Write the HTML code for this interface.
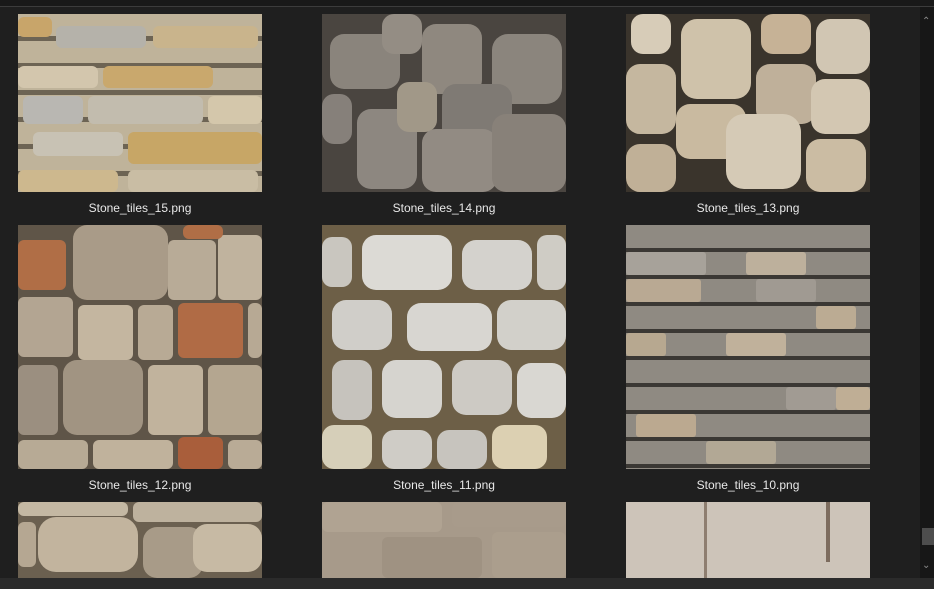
<!DOCTYPE html>
<html><head><meta charset="utf-8"><style>
html,body{margin:0;padding:0}
body{width:934px;height:589px;background:#1f1f1f;position:relative;overflow:hidden;font-family:"Liberation Sans",sans-serif}
.topline{position:absolute;left:0;top:0;width:934px;height:6px;background:#191919;border-bottom:1px solid #3c3c3c}
.sb{position:absolute;left:920px;top:7px;width:14px;height:571px;background:#171717}
.thumb{position:absolute;left:922px;top:528px;width:12px;height:17px;background:#4d4d4d}
.bottom{position:absolute;left:0;top:578px;width:934px;height:11px;background:#2b2b2b}
.t{position:absolute;overflow:hidden;width:244px}
.lbl{position:absolute;width:244px;text-align:center;color:#e8e8e8;font-size:12px}
.s{position:absolute;border-radius:6px}
.arr{position:absolute;left:922px;color:#8a8a8a;font-size:10px}
</style></head><body>
<div class="topline"></div>
<div class="sb"></div><div class="thumb"></div>
<div class="arr" style="top:16px">&#8963;</div>
<div class="arr" style="top:560px">&#8964;</div>
<div class="bottom"></div>

<!-- row 1 -->
<div class="t" style="left:18px;top:14px;height:178px;background:
repeating-linear-gradient(180deg,#bfb39a 0 22px,#6d6454 22px 27px);">
<div class="s" style="left:0;top:3px;width:34px;height:20px;background:#c8a56a"></div>
<div class="s" style="left:38px;top:12px;width:90px;height:22px;background:#b5b2aa"></div>
<div class="s" style="left:135px;top:12px;width:105px;height:22px;background:#c9b48c"></div>
<div class="s" style="left:0;top:52px;width:80px;height:22px;background:#d3c6ad"></div>
<div class="s" style="left:85px;top:52px;width:110px;height:22px;background:#c9a86d"></div>
<div class="s" style="left:5px;top:82px;width:60px;height:28px;background:#b9b7b2"></div>
<div class="s" style="left:70px;top:82px;width:115px;height:28px;background:#c2bcae"></div>
<div class="s" style="left:190px;top:82px;width:54px;height:28px;background:#d4c7ab"></div>
<div class="s" style="left:15px;top:118px;width:90px;height:24px;background:#c8c2b4"></div>
<div class="s" style="left:110px;top:118px;width:134px;height:32px;background:#c7a666"></div>
<div class="s" style="left:0;top:156px;width:100px;height:22px;background:#cdb88e"></div>
<div class="s" style="left:110px;top:156px;width:130px;height:22px;background:#c9bda4"></div>
</div>
<div class="lbl" style="left:18px;top:201px">Stone_tiles_15.png</div>

<div class="t" style="left:322px;top:14px;height:178px;background:#4a4540;">
<div class="s" style="left:8px;top:20px;width:70px;height:55px;background:#8a847c;border-radius:14px"></div>
<div class="s" style="left:60px;top:0;width:40px;height:40px;background:#948d84;border-radius:12px"></div>
<div class="s" style="left:100px;top:10px;width:60px;height:70px;background:#8f887f;border-radius:14px"></div>
<div class="s" style="left:170px;top:20px;width:70px;height:70px;background:#8b857d;border-radius:16px"></div>
<div class="s" style="left:0;top:80px;width:30px;height:50px;background:#86807a;border-radius:12px"></div>
<div class="s" style="left:35px;top:95px;width:60px;height:80px;background:#8d8780;border-radius:14px"></div>
<div class="s" style="left:75px;top:68px;width:40px;height:50px;background:#a19888;border-radius:12px"></div>
<div class="s" style="left:120px;top:70px;width:70px;height:60px;background:#7f7a74;border-radius:14px"></div>
<div class="s" style="left:100px;top:115px;width:75px;height:63px;background:#928b83;border-radius:14px"></div>
<div class="s" style="left:170px;top:100px;width:74px;height:78px;background:#888179;border-radius:14px"></div>
</div>
<div class="lbl" style="left:322px;top:201px">Stone_tiles_14.png</div>

<div class="t" style="left:626px;top:14px;height:178px;background:#3a342c;">
<div class="s" style="left:5px;top:0;width:40px;height:40px;background:#d7ccb8;border-radius:12px"></div>
<div class="s" style="left:55px;top:5px;width:70px;height:80px;background:#cfc2aa;border-radius:16px"></div>
<div class="s" style="left:135px;top:0;width:50px;height:40px;background:#c6b296;border-radius:12px"></div>
<div class="s" style="left:190px;top:5px;width:54px;height:55px;background:#d1c6b3;border-radius:14px"></div>
<div class="s" style="left:0;top:50px;width:50px;height:70px;background:#c5b79f;border-radius:14px"></div>
<div class="s" style="left:130px;top:50px;width:60px;height:60px;background:#bfb09a;border-radius:14px"></div>
<div class="s" style="left:185px;top:65px;width:59px;height:55px;background:#d3c7b2;border-radius:14px"></div>
<div class="s" style="left:50px;top:90px;width:70px;height:55px;background:#c9baa0;border-radius:14px"></div>
<div class="s" style="left:100px;top:100px;width:75px;height:75px;background:#d5cab6;border-radius:18px"></div>
<div class="s" style="left:0;top:130px;width:50px;height:48px;background:#c0b097;border-radius:14px"></div>
<div class="s" style="left:180px;top:125px;width:60px;height:53px;background:#cbbca3;border-radius:14px"></div>
</div>
<div class="lbl" style="left:626px;top:201px">Stone_tiles_13.png</div>

<!-- row 2 -->
<div class="t" style="left:18px;top:225px;height:244px;background:#5f5548;">
<div class="s" style="left:0;top:15px;width:48px;height:50px;background:#b06e46"></div>
<div class="s" style="left:55px;top:0;width:95px;height:75px;background:#a99b88;border-radius:14px"></div>
<div class="s" style="left:150px;top:15px;width:48px;height:60px;background:#b8ab97"></div>
<div class="s" style="left:200px;top:10px;width:44px;height:65px;background:#c0b39e"></div>
<div class="s" style="left:165px;top:0;width:40px;height:14px;background:#b06e46"></div>
<div class="s" style="left:0;top:72px;width:55px;height:60px;background:#b3a592"></div>
<div class="s" style="left:60px;top:80px;width:55px;height:55px;background:#c4b6a0"></div>
<div class="s" style="left:120px;top:80px;width:35px;height:55px;background:#b8aa95"></div>
<div class="s" style="left:160px;top:78px;width:65px;height:55px;background:#b06b45"></div>
<div class="s" style="left:230px;top:78px;width:14px;height:55px;background:#b7a994"></div>
<div class="s" style="left:0;top:140px;width:40px;height:70px;background:#9b8f80"></div>
<div class="s" style="left:45px;top:135px;width:80px;height:75px;background:#a19482;border-radius:14px"></div>
<div class="s" style="left:130px;top:140px;width:55px;height:70px;background:#c1b39d"></div>
<div class="s" style="left:190px;top:140px;width:54px;height:70px;background:#b4a690"></div>
<div class="s" style="left:0;top:215px;width:70px;height:29px;background:#b7aa95"></div>
<div class="s" style="left:75px;top:215px;width:80px;height:29px;background:#c0b29c"></div>
<div class="s" style="left:160px;top:212px;width:45px;height:32px;background:#a95e3b"></div>
<div class="s" style="left:210px;top:215px;width:34px;height:29px;background:#b9ab96"></div>
</div>
<div class="lbl" style="left:18px;top:478px">Stone_tiles_12.png</div>

<div class="t" style="left:322px;top:225px;height:244px;background:#6d5f47;">
<div class="s" style="left:0;top:12px;width:30px;height:50px;background:#c9c6bf;border-radius:10px"></div>
<div class="s" style="left:40px;top:10px;width:90px;height:55px;background:#dcdad5;border-radius:14px"></div>
<div class="s" style="left:140px;top:15px;width:70px;height:50px;background:#d4d2cd;border-radius:14px"></div>
<div class="s" style="left:215px;top:10px;width:29px;height:55px;background:#cfccc5;border-radius:10px"></div>
<div class="s" style="left:10px;top:75px;width:60px;height:50px;background:#d0cec9;border-radius:14px"></div>
<div class="s" style="left:85px;top:78px;width:85px;height:48px;background:#d8d6d1;border-radius:14px"></div>
<div class="s" style="left:175px;top:75px;width:69px;height:50px;background:#d2d0ca;border-radius:14px"></div>
<div class="s" style="left:10px;top:135px;width:40px;height:60px;background:#c6c3bd;border-radius:12px"></div>
<div class="s" style="left:60px;top:135px;width:60px;height:58px;background:#d6d4cf;border-radius:14px"></div>
<div class="s" style="left:130px;top:135px;width:60px;height:55px;background:#cdcac4;border-radius:14px"></div>
<div class="s" style="left:195px;top:138px;width:49px;height:55px;background:#d9d7d2;border-radius:14px"></div>
<div class="s" style="left:0;top:200px;width:50px;height:44px;background:#d6cfb9;border-radius:12px"></div>
<div class="s" style="left:60px;top:205px;width:50px;height:39px;background:#cfccc6;border-radius:12px"></div>
<div class="s" style="left:115px;top:205px;width:50px;height:39px;background:#c7c4be;border-radius:12px"></div>
<div class="s" style="left:170px;top:200px;width:55px;height:44px;background:#dcd0b2;border-radius:12px"></div>
</div>
<div class="lbl" style="left:322px;top:478px">Stone_tiles_11.png</div>

<div class="t" style="left:626px;top:225px;height:244px;background:
repeating-linear-gradient(180deg,#8f8a82 0 23px,#3b3834 23px 27px);">
<div class="s" style="left:0;top:27px;width:80px;height:23px;background:#a7a29a;border-radius:3px"></div>
<div class="s" style="left:120px;top:27px;width:60px;height:23px;background:#bdb09c;border-radius:3px"></div>
<div class="s" style="left:0;top:54px;width:75px;height:23px;background:#b9a993;border-radius:3px"></div>
<div class="s" style="left:130px;top:54px;width:60px;height:23px;background:#a09a92;border-radius:3px"></div>
<div class="s" style="left:190px;top:81px;width:40px;height:23px;background:#bbab93;border-radius:3px"></div>
<div class="s" style="left:0;top:108px;width:40px;height:23px;background:#b7a890;border-radius:3px"></div>
<div class="s" style="left:100px;top:108px;width:60px;height:23px;background:#c0b19b;border-radius:3px"></div>
<div class="s" style="left:160px;top:162px;width:50px;height:23px;background:#a19b93;border-radius:3px"></div>
<div class="s" style="left:210px;top:162px;width:34px;height:23px;background:#bfae95;border-radius:3px"></div>
<div class="s" style="left:10px;top:189px;width:60px;height:23px;background:#bba990;border-radius:3px"></div>
<div class="s" style="left:80px;top:216px;width:70px;height:23px;background:#b2a895;border-radius:3px"></div>
</div>
<div class="lbl" style="left:626px;top:478px">Stone_tiles_10.png</div>

<!-- row 3 -->
<div class="t" style="left:18px;top:502px;height:76px;background:#6b6050;">
<div class="s" style="left:0;top:0;width:110px;height:14px;background:#c4b8a3"></div>
<div class="s" style="left:115px;top:0;width:129px;height:20px;background:#beb29e"></div>
<div class="s" style="left:20px;top:15px;width:100px;height:55px;background:#c2b49e;border-radius:18px"></div>
<div class="s" style="left:0;top:20px;width:18px;height:45px;background:#b5a792"></div>
<div class="s" style="left:125px;top:25px;width:60px;height:51px;background:#a89b88;border-radius:14px"></div>
<div class="s" style="left:175px;top:22px;width:69px;height:48px;background:#c7baa4;border-radius:14px"></div>
</div>
<div class="t" style="left:322px;top:502px;height:76px;background:#a79a8a;">
<div class="s" style="left:0;top:0;width:120px;height:30px;background:#b0a392"></div>
<div class="s" style="left:130px;top:0;width:114px;height:25px;background:#a89b8b"></div>
<div class="s" style="left:60px;top:35px;width:100px;height:41px;background:#9f9282"></div>
<div class="s" style="left:170px;top:30px;width:74px;height:46px;background:#ab9e8d"></div>
</div>
<div class="t" style="left:626px;top:502px;height:76px;background:#cdc4b9;">
<div style="position:absolute;left:78px;top:0;width:3px;height:76px;background:#8e7e70"></div>
<div style="position:absolute;left:200px;top:0;width:4px;height:60px;background:#7d6c5e"></div>
</div>
</body></html>
